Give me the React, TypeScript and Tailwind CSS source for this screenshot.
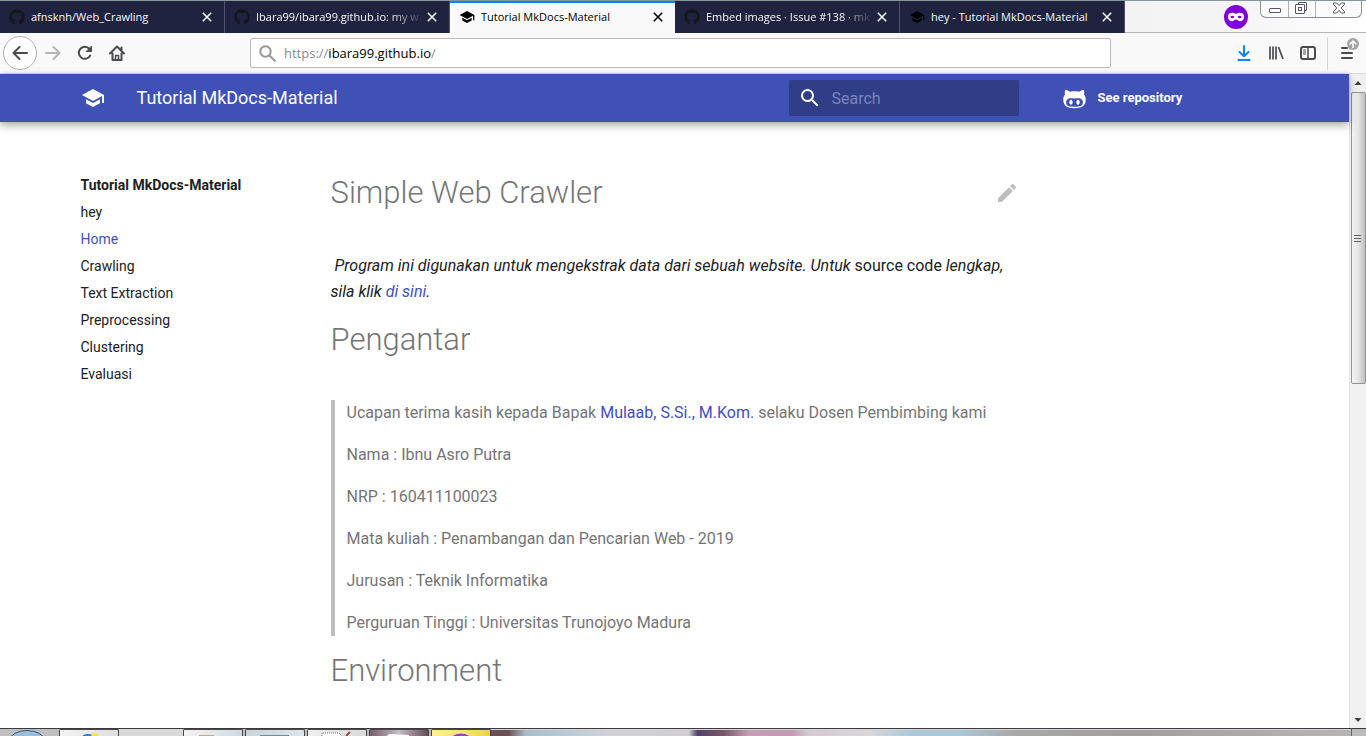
import type { ReactNode } from "react";
import { MdSchool, MdSearch, MdEdit } from "react-icons/md";
import { FaGithub } from "react-icons/fa";

type Tab = { title: string; icon: "github" | "school"; active?: boolean; clipped?: boolean };

const tabs: Tab[] = [
  { title: "afnsknh/Web_Crawling", icon: "github" },
  { title: "Ibara99/ibara99.github.io: my w", icon: "github", clipped: true },
  { title: "Tutorial MkDocs-Material", icon: "school", active: true },
  { title: "Embed images · Issue #138 · mk", icon: "github", clipped: true },
  { title: "hey - Tutorial MkDocs-Material", icon: "school" },
];

const pages = ["hey", "Home", "Crawling", "Text Extraction", "Preprocessing", "Clustering", "Evaluasi"];

const details = [
  "Nama : Ibnu Asro Putra",
  "NRP : 160411100023",
  "Mata kuliah : Penambangan dan Pencarian Web - 2019",
  "Jurusan : Teknik Informatika",
  "Perguruan Tinggi : Universitas Trunojoyo Madura",
];

function BrowserTab({ tab }: { tab: Tab }) {
  return (
    <div
      className={
        tab.active
          ? "flex h-8 w-[225px] items-center border-t-2 border-[#0a84ff] bg-[#f9f9fa] pb-0.5 pl-[9px] pr-3 text-black"
          : "flex h-8 w-[225px] items-center border-r border-[#50536a] bg-[#202340] pl-[9px] pr-3 text-[#f9f9fa]"
      }
    >
      {tab.icon === "github" ? (
        <FaGithub className="size-4 shrink-0 text-[#15171c]" />
      ) : (
        <MdSchool className="size-4 shrink-0 text-black" />
      )}
      <span
        className={
          tab.clipped
            ? "ml-1.5 min-w-0 flex-1 whitespace-nowrap [mask-image:linear-gradient(to_right,black_80%,transparent)]"
            : "ml-1.5 min-w-0 flex-1 whitespace-nowrap"
        }
      >
        {tab.title}
      </span>
      <button type="button" aria-label="Close tab" className="ml-1 shrink-0">
        <svg viewBox="0 0 10 10" className="size-2.5" fill="none" stroke="currentColor" strokeWidth="1.6">
          <path d="M0.8 0.8 9.2 9.2M9.2 0.8 0.8 9.2" />
        </svg>
      </button>
    </div>
  );
}

function WindowControls() {
  return (
    <div className="mr-1 flex h-[17px] w-[102px] rounded-b-md border border-t-0 border-[#8d8d95] bg-[#fbfbfc]">
      <button type="button" aria-label="Minimize" className="grid w-7 place-items-center border-r border-[#b0b0b6]">
        <svg viewBox="0 0 12 12" className="size-3" fill="#fff" stroke="#535666">
          <rect x="0.5" y="5.5" width="11" height="4" rx="0.5" />
        </svg>
      </button>
      <button type="button" aria-label="Restore" className="grid w-[27px] pb-0.5 pr-0.5 place-items-center border-r border-[#b0b0b6]">
        <svg viewBox="0 0 12 12" className="size-3" fill="#fff" stroke="#535666">
          <rect x="3.5" y="0.5" width="8" height="8" rx="0.5" />
          <rect x="0.5" y="2.5" width="9" height="9" rx="0.5" />
          <rect x="3.5" y="5.5" width="3" height="3" />
        </svg>
      </button>
      <button type="button" aria-label="Close window" className="grid flex-1 place-items-center pb-0.5">
        <svg viewBox="0 0 12 12" className="size-3" fill="#fff" stroke="#535666">
          <path d="M0.5 1h3.2L6 3.6 8.3 1h3.2v1.4L8.2 6l3.3 3.6V11H8.3L6 8.4 3.7 11H0.5V9.6L3.8 6 0.5 2.4z" />
        </svg>
      </button>
    </div>
  );
}

function TitleBar() {
  return (
    <div className="flex h-[33px] shrink-0 border-t border-[#87949a] bg-linear-to-r from-[#e6e6e6] via-[#f4f4f4] via-90% to-white text-[11px] font-['Open_Sans',sans-serif]">
      <div className="flex">
        {tabs.map((t) => (
          <BrowserTab key={t.title} tab={t} />
        ))}
      </div>
      <div className="flex flex-1 justify-end border-b border-[#b5b5b5]">
        <svg viewBox="0 0 24 24" className="mr-3 mt-1 size-6">
          <circle cx="12" cy="12" r="12" fill="#8000d7" />
          <path
            fill="#fff"
            fillRule="evenodd"
            d="M12 9C10.800 8.200 9.500 7.700 8 7.700 5.500 7.700 4 9.300 4 11.700 4 14.500 5.600 16.300 7.900 16.300c1.800 0 2.700-1.700 4.100-1.700s2.300 1.700 4.100 1.700c2.300 0 3.900-1.800 3.900-4.600 0-2.400-1.500-4-4-4-1.500 0-2.800.5-4 1.300zM6.200 12c.6-.8 1.400-1.200 2.200-1.200s1.600.4 2.100 1.200c-.6.8-1.300 1.200-2.100 1.200s-1.600-.4-2.200-1.200zm7.300 0c.5-.8 1.300-1.200 2.100-1.200s1.600.4 2.200 1.200c-.6.8-1.400 1.200-2.200 1.200s-1.500-.4-2.100-1.200z"
          />
        </svg>
        <WindowControls />
      </div>
    </div>
  );
}

function ToolIcon({ label, className, children }: { label: string; className: string; children: ReactNode }) {
  return (
    <button type="button" aria-label={label} className={className}>
      <svg
        viewBox="0 0 16 16"
        className="size-4"
        fill="none"
        stroke="currentColor"
        strokeWidth="2"
        strokeLinecap="round"
        strokeLinejoin="round"
      >
        {children}
      </svg>
    </button>
  );
}

function NavBar() {
  return (
    <div className="flex h-[41px] shrink-0 items-center border-b border-[#dcdcdc] bg-[#f9f9fa] text-[#4a4a4f]">
      <div className="flex w-[250px] shrink-0 items-center pl-[3px]">
        <ToolIcon
          label="Back"
          className="grid size-[34px] place-items-center rounded-full border border-[#b1b1b1] bg-[#fdfdfd]"
        >
          <path d="M15 8H1.500M7.500 2 1.500 8l6 6" />
        </ToolIcon>
        <ToolIcon label="Forward" className="ml-2 text-[#b5b5b7]">
          <path d="M1 8h13.500M8.500 2l6 6-6 6" />
        </ToolIcon>
        <ToolIcon label="Reload" className="ml-4">
          <path d="M13.200 10.500A6 6 0 1 1 12.500 4" />
          <path d="M14.500 1.500v5h-5z" fill="currentColor" strokeWidth="1" />
        </ToolIcon>
        <ToolIcon label="Home" className="ml-4">
          <path d="M1 8.500 8 1.500l7 7M3.500 8.500V15h9V8.500M12.500 5V2.500" />
          <path d="M6.500 14.500v-4h3v4" strokeWidth="1.500" />
        </ToolIcon>
      </div>
      <div className="flex h-[30px] min-w-0 flex-1 items-center rounded-xs border border-[#b9b9bb] bg-white pl-2">
        <svg viewBox="0 0 17 17" className="size-[17px] shrink-0" fill="none" stroke="#97979a" strokeWidth="2">
          <circle cx="6.500" cy="6.500" r="5.200" />
          <path d="m10.500 10.500 5.300 5.300" strokeLinecap="round" />
        </svg>
        <a
          href="https://ibara99.github.io/"
          className="ml-2 pt-0.5 text-[13px] text-[#8a8a8c] font-['Open_Sans',sans-serif]"
        >
          https://<span className="text-black">ibara99.github.io</span>/
        </a>
      </div>
      <div className="flex w-[255px] shrink-0 items-center justify-end">
        <ToolIcon label="Downloads" className="text-[#0a84ff]">
          <path d="M8 1v10M3.500 7 8 11.300 12.500 7M2.500 15h11" />
        </ToolIcon>
        <ToolIcon label="Library" className="ml-4">
          <path d="M2 1.500v13M5 1.500v13M8 1.500v13M10.500 2l4.500 12" strokeLinecap="butt" strokeWidth="1.700" />
        </ToolIcon>
        <ToolIcon label="Sidebar" className="ml-4">
          <rect x="1" y="2" width="14" height="12" rx="2" />
          <path d="M8 2v12" strokeWidth="1.500" />
          <path d="M3.500 5h2M3.500 7h2M3.500 9h2" strokeWidth="1" />
        </ToolIcon>
        <div className="ml-[11px] h-[33px] border-l border-[#d5d5d6]" />
        <button type="button" aria-label="Menu" className="ml-3 mr-[7px]">
          <svg viewBox="0 0 19 30" className="h-[30px] w-[19px]" fill="none" strokeLinecap="round">
            <path d="M2 10h5M2 15h10M2 20h10" stroke="#4a4a4f" strokeWidth="2" />
            <circle cx="13" cy="6" r="6" fill="#a3a3a5" />
            <path d="M13 9.500V3M10 6l3-3 3 3" stroke="#fff" strokeWidth="1.500" />
          </svg>
        </button>
      </div>
    </div>
  );
}

function SiteHeader() {
  return (
    <header className="relative h-12 shrink-0 bg-[#3f51b5] text-white shadow-[0_0_4px_rgba(0,0,0,0.14),0_4px_8px_rgba(0,0,0,0.28)]">
      <div className="mx-auto flex h-full max-w-[1220px] items-center">
        <a href="#home" aria-label="Tutorial MkDocs-Material" className="ml-4">
          <MdSchool className="size-6" />
        </a>
        <span className="ml-8 flex-1 text-lg">Tutorial MkDocs-Material</span>
        <label className="flex h-9 w-[230px] items-center rounded-xs bg-[#303d87] pl-[9px]">
          <MdSearch className="size-6 shrink-0" />
          <input
            type="search"
            aria-label="Search"
            placeholder="Search"
            className="ml-2.5 w-full min-w-0 bg-transparent pt-0.5 text-base outline-none placeholder:text-[#7a84b7]"
          />
        </label>
        <a href="#repository" className="ml-[42px] flex w-[224px] items-center text-[13px] font-bold">
          <svg viewBox="0 0 24 24" className="size-[27px]" fill="currentColor">
            <path d="M20.38 8.530C20.540 8.130 21.060 6.540 20.210 4.390c0 0-1.310-.39-4.300 1.610C14.660 5.670 13.330 5.620 12 5.620c-1.320 0-2.660.05-3.910.38C5.100 3.970 3.790 4.390 3.790 4.390 2.940 6.540 3.460 8.130 3.630 8.530 2.610 9.620 2 11 2 12.720 2 19.160 6.160 20.610 12 20.610c5.790 0 10-1.450 10-7.890C22 11 21.390 9.620 20.380 8.530M12 19.380c-4.120 0-7.470-.19-7.470-4.190 0-.95.47-1.850 1.270-2.580 1.340-1.230 3.630-.58 6.200-.58 2.590 0 4.850-.65 6.200.58.8.73 1.300 1.620 1.300 2.580 0 3.990-3.370 4.190-7.500 4.190m-3.140-6.260c-.82 0-1.500 1-1.500 2.220 0 1.230.68 2.240 1.500 2.240.83 0 1.500-1 1.500-2.240 0-1.230-.67-2.220-1.500-2.220m6.280 0c-.83 0-1.500.99-1.500 2.220 0 1.240.67 2.240 1.500 2.240.82 0 1.500-1 1.500-2.240 0-1.230-.64-2.220-1.500-2.220z" />
          </svg>
          <span className="ml-2.5">See repository</span>
        </a>
      </div>
    </header>
  );
}

function Content() {
  return (
    <main className="mx-auto flex w-full max-w-[1220px] flex-1 overflow-hidden">
      <nav aria-label="Pages" className="w-[242px] shrink-0 pl-4 pt-[50px] text-sm leading-[27px]">
        <h2 className="font-bold">Tutorial MkDocs-Material</h2>
        <ul>
          {pages.map((p) => (
            <li key={p}>
              <a href={"#" + p} className={p === "Home" ? "text-[#3f51b5]" : "text-[#212121]"}>
                {p}
              </a>
            </li>
          ))}
        </ul>
      </nav>
      <article className="mx-6 flex-1 pt-[50px] text-base leading-[26px]">
        <div className="flex items-center justify-between">
          <h1 className="text-[31px] font-light leading-[42px] text-[#757575]">Simple Web Crawler</h1>
          <a href="#edit" aria-label="Edit this page" className="text-[#bdbdbd]">
            <MdEdit className="size-6" />
          </a>
        </div>
        <p className="mt-[39px] italic">
          &nbsp;Program ini digunakan untuk mengekstrak data dari sebuah website. Untuk{" "}
          <span className="not-italic">source code</span> lengkap, sila klik{" "}
          <a href="#source" className="text-[#3f51b5]">
            di sini
          </a>
          .
        </p>
        <h1 className="mt-3.5 text-[31px] font-light leading-[42px] text-[#757575]">Pengantar</h1>
        <blockquote className="mt-[39px] flex flex-col gap-4 border-l-4 border-[#bdbdbd] pl-3 text-[#757575]">
          <p>
            Ucapan terima kasih kepada Bapak{" "}
            <a href="#mulaab" className="text-[#3f51b5]">
              Mulaab, S.Si., M.Kom.
            </a>{" "}
            selaku Dosen Pembimbing kami
          </p>
          {details.map((d) => (
            <p key={d}>{d}</p>
          ))}
        </blockquote>
        <h1 className="mt-3.5 text-[31px] font-light leading-[42px] text-[#757575]">Environment</h1>
      </article>
      <div className="w-[242px] shrink-0" />
    </main>
  );
}

function Scrollbar() {
  return (
    <div className="flex w-[17px] shrink-0 flex-col items-center border-l border-[#e3e3e3] bg-[#f0f0f0]">
      <svg viewBox="0 0 16 18" className="h-[18px] w-4 shrink-0" fill="#404040">
        <path d="m8 7 3.500 4h-7z" />
      </svg>
      <div className="grid h-[292px] w-[15px] shrink-0 place-items-center rounded-xs border border-[#939393] bg-linear-to-r from-[#f4f4f4] via-[#e3e3e5] to-[#bfbfc4]">
        <svg viewBox="0 0 8 9" className="h-[9px] w-2" stroke="#606060">
          <path d="M0 1.500h7M0 4.500h7M0 7.500h7" />
        </svg>
      </div>
      <div className="flex-1" />
      <svg viewBox="0 0 16 18" className="h-[18px] w-4 shrink-0" fill="#404040">
        <path d="m8 12 3.500-4h-7z" />
      </svg>
    </div>
  );
}

const taskButton = "h-[7px] shrink-0 overflow-hidden rounded-t-xs border border-b-0 border-[#4a4648]";

function Taskbar() {
  return (
    <footer className="flex h-2 shrink-0 overflow-hidden border-t border-[#3c3a3e] bg-linear-to-r from-[#c0bfc0] to-[#a8a6a7]">
      <button type="button" aria-label="Start" className="w-[59px] shrink-0 overflow-hidden">
        <svg viewBox="0 0 59 7" className="h-[7px] w-[59px]">
          <ellipse cx="27" cy="11" rx="17" ry="9.500" fill="#9dbdd6" stroke="#2a5a86" />
        </svg>
      </button>
      <button type="button" aria-label="Messenger" className={taskButton + " w-[60px] bg-linear-to-r from-[#f3f3f3] to-[#dedede]"}>
        <svg viewBox="0 0 58 6" className="h-1.5 w-[58px]">
          <ellipse cx="28" cy="8" rx="7" ry="4" fill="#2b7fd0" />
          <path d="m34 2 1.500 2 3 .5-2 2h-4l-2-2 2.500-.5z" fill="#fbe52c" />
        </svg>
      </button>
      <div className="w-16 shrink-0 bg-[#d9d9da]" />
      <button type="button" aria-label="Explorer" className={taskButton + " w-[60px] bg-linear-to-r from-[#f5f3f4] to-[#cfdbe1]"}>
        <svg viewBox="0 0 58 6" className="h-1.5 w-[58px]">
          <path d="M15 5h15v2H15z" fill="#c7ad72" />
        </svg>
      </button>
      <button type="button" aria-label="Window" className={taskButton + " ml-0.5 w-[60px] bg-linear-to-r from-[#c9d5da] to-[#dbe5ea]"}>
        <svg viewBox="0 0 58 6" className="h-1.5 w-[58px]">
          <path d="M14 5h29v2H14z" fill="#7a8790" />
        </svg>
      </button>
      <button type="button" aria-label="Notepad" className={taskButton + " ml-0.5 w-[60px] bg-linear-to-r from-[#f0f0f0] to-[#d9d9da]"}>
        <svg viewBox="0 0 58 6" className="h-1.5 w-[58px]">
          <path d="M14 6V3h17l3 3" fill="#fff" stroke="#777" strokeDasharray="1 1" />
          <path d="m38 6 4-4" stroke="#a5434a" strokeWidth="2" />
        </svg>
      </button>
      <button type="button" aria-label="Files" className={taskButton + " ml-0.5 w-[60px] bg-linear-to-r from-[#765f69] via-[#c9bfc4] to-[#654c59]"}>
        <svg viewBox="0 0 58 6" className="h-1.5 w-[58px]">
          <path d="m17 6 2-2 20 1v1z" fill="#fff" />
        </svg>
      </button>
      <button type="button" aria-label="Browser" className={taskButton + " ml-0.5 w-[60px] bg-linear-to-r from-[#fff19a] to-[#ecd548]"}>
        <svg viewBox="0 0 58 6" className="h-1.5 w-[58px]">
          <ellipse cx="29" cy="9" rx="10" ry="6" fill="#9c45b2" stroke="#e9dff0" />
        </svg>
      </button>
      <div className="flex-1 border-t border-[#d8d8da] bg-[linear-gradient(to_right,#6b5056_0%,#6b5056_2%,#a9bdc7_4%,#b3c9d4_8%,#d2d2d6_14%,#cfcdd0_23%,#4f4468_24%,#7a5568_27%,#c79eb2_30%,#c39bb0_35%,#d2cbd1_37%,#d9d6d9_44%,#a9c9da_49%,#a9c9da_54%,#a8a7a8_61%,#a09e9f_75%,#b6b4b5_100%)]" />
      <button type="button" aria-label="Show desktop" className="w-[15px] border-l border-[#666] bg-[#bcbbbc]" />
    </footer>
  );
}

export default function App() {
  return (
    <div className="flex h-screen flex-col overflow-hidden bg-white text-[#212121] font-[Roboto,sans-serif]">
      <TitleBar />
      <NavBar />
      <div className="flex min-h-0 flex-1">
        <div className="flex min-w-0 flex-1 flex-col">
          <SiteHeader />
          <Content />
        </div>
        <Scrollbar />
      </div>
      <Taskbar />
    </div>
  );
}
